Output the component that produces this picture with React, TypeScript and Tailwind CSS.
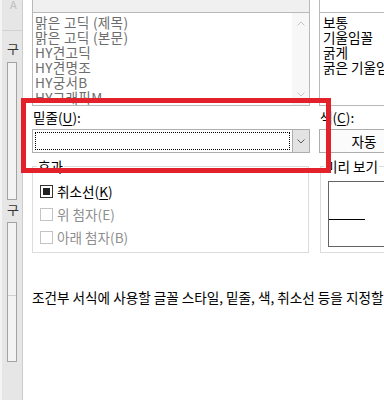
import type { ReactNode } from "react";

const FONTS = [
  "맑은 고딕 (제목)",
  "맑은 고딕 (본문)",
  "HY견고딕",
  "HY견명조",
  "HY궁서B",
  "HY그래픽M",
];

const STYLES = ["보통", "기울임꼴", "굵게", "굵은 기울임꼴"];

function Chevron({ dir }: { dir: "up" | "down" }) {
  return (
    <svg width="8" height="5" viewBox="0 0 8 5" fill="none" stroke="currentColor" strokeWidth="1">
      {dir === "down" ? <path d="M0.5 0.5 L4 4 L7.5 0.5" /> : <path d="M0.5 4.5 L4 1 L7.5 4.5" />}
    </svg>
  );
}

function Key({ children }: { children: ReactNode }) {
  return <span className="underline underline-offset-[2px]">{children}</span>;
}

function Check({ label, checked, disabled }: { label: ReactNode; checked?: boolean; disabled?: boolean }) {
  return (
    <div className="flex h-[15px] items-center gap-[4px]">
      <span
        className={`flex size-[13px] shrink-0 items-center justify-center border bg-white ${
          disabled ? "border-[#c4c4c4]" : "border-[#333333]"
        }`}
      >
        {checked && <span className="size-[7px] bg-[#222222]" />}
      </span>
      <span className={disabled ? "text-[#8f8f8f]" : ""}>{label}</span>
    </div>
  );
}

// Strip of the window lying behind the dialog.
function BackWindow() {
  return (
    <div className="flex w-[22px] shrink-0 flex-col border-l-2 border-[#f4f4f4] bg-[#e6e6e6] text-[13px]">
      <div className="h-[31px] border-b border-[#d2d2d2] pl-[8px] text-[11px] leading-[9px] text-[#bdbdbd]">A</div>
      <div className="mt-[11px] h-[13px] overflow-hidden pl-[5px] leading-[13px] text-[#333333]">구</div>
      <div className="mt-[7px] ml-[5px] h-[138px] w-[10px] border border-[#a3a3a3] bg-[#f3f3f3]" />
      <div className="mt-[3px] h-[13px] overflow-hidden pl-[5px] leading-[13px] text-[#333333]">구</div>
      <div className="mt-[6px] ml-[5px] flex h-[140px] w-[10px] flex-col border border-[#a3a3a3] bg-[#f3f3f3]">
        <div className="mt-[72px] border-t border-[#cfcfcf]" />
      </div>
    </div>
  );
}

export default function App() {
  return (
    <div className="relative flex h-[400px] w-[384px] overflow-hidden bg-white font-['Noto_Sans_CJK_KR',sans-serif] text-[13.6px] leading-[15px] text-black">
      <BackWindow />

      <div className="flex min-w-0 flex-1 flex-col overflow-hidden border-l border-[#cdcdcd] pl-[9px]">
        {/* font / style lists */}
        <div className="flex gap-[9px]">
          <div className="flex w-[278px] shrink-0 flex-col">
            <div className="h-[13px] border-x border-b border-[#b9b9b9] bg-[#f0f0f0]" />
            <div className="flex h-[93px] border-x border-b border-[#b9b9b9]">
              <div className="flex-1 overflow-hidden pl-[2px] pt-[2px] tracking-[0.3px] text-[#6d6d6d]">
                {FONTS.map((f) => (
                  <div key={f} className="h-[15px] whitespace-nowrap">
                    {f}
                  </div>
                ))}
              </div>
              <div className="flex w-[17px] flex-col items-center justify-between bg-[#f7f7f7] py-[8px] text-[#c6c6c6]">
                <Chevron dir="up" />
                <Chevron dir="down" />
              </div>
            </div>
          </div>

          <div className="flex w-[110px] shrink-0 flex-col">
            <div className="h-[13px] border-x border-b border-[#b9b9b9] bg-white" />
            <div className="h-[93px] overflow-hidden border-x border-b border-[#b9b9b9] pl-[3px] pt-[2px]">
              {STYLES.map((s) => (
                <div key={s} className="h-[15px] whitespace-nowrap">
                  {s}
                </div>
              ))}
            </div>
          </div>
        </div>

        {/* underline / colour */}
        <div className="mt-[4px] flex gap-[9px]">
          <div className="flex w-[278px] shrink-0 flex-col">
            <div className="h-[15px] pl-[1px]">
              밑줄(<Key>U</Key>):
            </div>
            <div className="mt-[4px] flex h-[24px] border border-[#adadad] bg-white">
              <div className="flex-1 p-[2px]">
                <div className="h-full border border-dotted border-black" />
              </div>
              <div className="flex w-[17px] items-center justify-center border-l border-[#adadad] bg-[#e3e3e3] text-[#5a5a5a]">
                <Chevron dir="down" />
              </div>
            </div>
          </div>

          <div className="flex w-[110px] shrink-0 flex-col">
            <div className="h-[15px] pl-[1px]">
              색(<Key>C</Key>):
            </div>
            <div className="mt-[4px] flex h-[24px] w-[90px] items-center justify-center border border-[#adadad] bg-[#fbfbfb]">
              자동
            </div>
          </div>
        </div>

        {/* effects / preview */}
        <div className="mt-[6px] flex gap-[11px]">
          <fieldset className="h-[94px] w-[277px] shrink-0 border border-[#dcdcdc]">
            <legend className="ml-[4px] px-[1px]">효과</legend>
            <div className="mt-[10px] flex flex-col gap-[8px] pl-[7px]">
              <Check
                checked
                label={
                  <>
                    취소선(<Key>K</Key>)
                  </>
                }
              />
              <Check disabled label="위 첨자(E)" />
              <Check disabled label="아래 첨자(B)" />
            </div>
          </fieldset>

          <fieldset className="h-[94px] w-[110px] shrink-0 border border-[#dcdcdc]">
            <legend className="ml-[3px] px-[1px]">미리 보기</legend>
            <div className="ml-[7px] mt-[7px] flex h-[66px] flex-col border border-[#646464]">
              <div className="mt-[37px] h-px w-[36px] bg-black" />
            </div>
          </fieldset>
        </div>

        <div className="mt-[37px] whitespace-nowrap">
          조건부 서식에 사용할 글꼴 스타일, 밑줄, 색, 취소선 등을 지정할 수 있습니다.
        </div>
      </div>

      {/* red annotation frame */}
      <div className="pointer-events-none absolute left-[21px] top-[98px] h-[75px] w-[310px] border-[5px] border-[#e3212b]" />
    </div>
  );
}
